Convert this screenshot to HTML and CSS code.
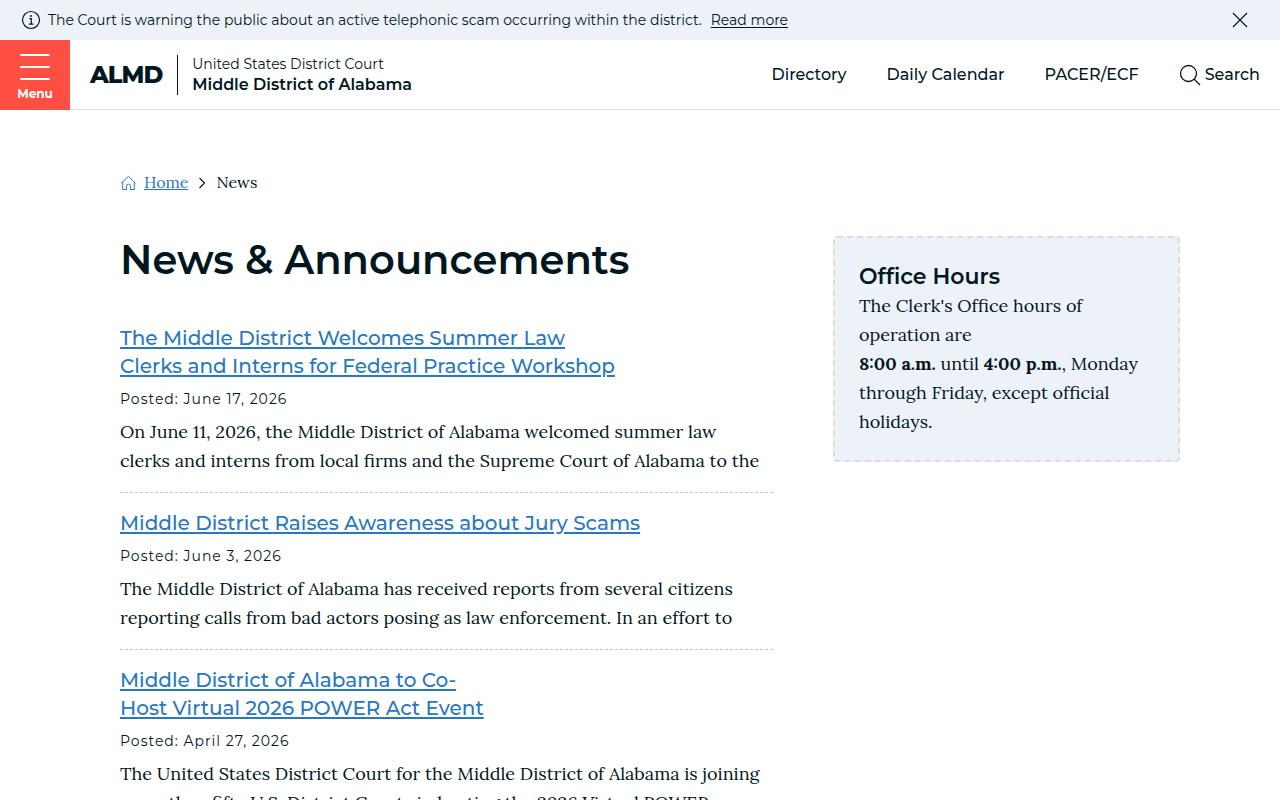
FILE: index.html
```html
<!DOCTYPE html>
<html lang="en">
<head>
<meta charset="utf-8">
<meta name="viewport" content="width=device-width, initial-scale=1">
<title>News &amp; Announcements | Middle District of Alabama</title>
<link rel="stylesheet" href="styles.css">
</head>
<body>
<div class="alert" role="status">
  <svg class="alert-icon" viewBox="0 0 20 20" width="20" height="20" fill="none" stroke="currentColor" aria-hidden="true"><circle cx="10" cy="10" r="8.5" stroke-width="1.2"/><path d="M8.3 8.7h2v5.2M7.8 14.1h4.6" stroke-width="1.2"/><circle cx="9.9" cy="6" r="1" fill="currentColor" stroke="none"/></svg>
  <p class="alert-text">The Court is warning the public about an active telephonic scam occurring within the district.</p>
  <a class="alert-link" href="#">Read more</a>
  <button class="alert-close" type="button" aria-label="Close alert"><svg viewBox="0 0 16 16" width="16" height="16" fill="none" stroke="currentColor" stroke-width="1.2"><path d="M1 1l14 14M15 1L1 15"/></svg></button>
</div>
<header class="header">
  <button class="menu" type="button">
    <svg viewBox="0 0 30 26" width="30" height="26" stroke="currentColor" stroke-width="2" stroke-linecap="round" aria-hidden="true"><path d="M1 1h28M1 13h28M1 25h28"/></svg>
    <span class="menu-label">Menu</span>
  </button>
  <a class="brand" href="#">
    <span class="brand-mark">ALMD</span>
    <span class="brand-name"><span class="brand-court">United States District Court</span><span class="brand-district">Middle District of Alabama</span></span>
  </a>
  <nav class="nav" aria-label="Main">
    <a class="nav-link" href="#">Directory</a>
    <a class="nav-link" href="#">Daily Calendar</a>
    <a class="nav-link" href="#">PACER/ECF</a>
    <button class="search" type="button"><svg viewBox="0 0 22 22" width="22" height="22" fill="none" stroke="currentColor" stroke-width="1.3" aria-hidden="true"><circle cx="9.5" cy="9.5" r="8"/><path d="M15 15l6 6"/></svg>Search</button>
  </nav>
</header>
<main class="page">
  <nav class="crumbs" aria-label="Breadcrumb">
    <a class="crumb-icon" href="#" aria-label="Home page"><svg viewBox="0 0 16 16" width="16" height="16" fill="none" stroke="currentColor" aria-hidden="true"><path d="M1.2 8.3L8.5 1.3l7 7M2.7 7.3v7.2h3.9v-3.7q0-1.6 1.9-1.6t1.9 1.6v3.7h3.9V7.3"/></svg></a>
    <a class="crumb-link" href="#">Home</a>
    <svg class="crumb-sep" viewBox="0 0 8 12" width="8" height="12" fill="none" stroke="currentColor" stroke-width="1.1" aria-hidden="true"><path d="M1.5 1L6.5 6l-5 5"/></svg>
    <span>News</span>
  </nav>
  <div class="columns">
    <section>
      <h1 class="title">News &amp; Announcements</h1>
      <article class="item">
        <h2 class="item-title"><a class="item-link" href="#">The Middle District Welcomes Summer Law <br>Clerks and Interns for Federal Practice Workshop</a></h2>
        <p class="date">Posted: June 17, 2026</p>
        <p class="summary">On June 11, 2026, the Middle District of Alabama welcomed summer law <br>clerks and interns from local firms and the Supreme Court of Alabama to the</p>
      </article>
      <article class="item">
        <h2 class="item-title"><a class="item-link" href="#">Middle District Raises Awareness about Jury Scams</a></h2>
        <p class="date">Posted: June 3, 2026</p>
        <p class="summary">The Middle District of Alabama has received reports from several citizens <br>reporting calls from bad actors posing as law enforcement. In an effort to</p>
      </article>
      <article class="item">
        <h2 class="item-title"><a class="item-link" href="#">Middle District of Alabama to Co-<br>Host Virtual 2026 POWER Act Event</a></h2>
        <p class="date">Posted: April 27, 2026</p>
        <p class="summary">The United States District Court for the Middle District of Alabama is joining <br>more than fifty U.S. District Courts in hosting the 2026 Virtual POWER</p>
      </article>
    </section>
    <aside class="hours">
      <h2 class="hours-title">Office Hours</h2>
      <p class="hours-text">The Clerk's Office hours of <br>operation are<br><strong>8:00 a.m.</strong> until <strong>4:00 p.m.</strong>, Monday <br>through Friday, except official <br>holidays.</p>
    </aside>
  </div>
</main>
</body>
</html>
```
FILE: styles.css
```css
:root {
  --ink: #00171f;
  --link: #2878c0;
  --tint: #edf2f9;
  --sans: Montserrat, Inter, "Open Sans", sans-serif;
  --serif: Lora, "Liberation Serif", serif;
}
* { box-sizing: border-box; }
body, h1, h2, p { margin: 0; }
body { color: var(--ink); background: #fff; font-family: var(--serif); font-size: 18px; line-height: 29px; }
a { color: inherit; }
button { padding: 0; border: 0; background: none; color: inherit; font-family: var(--sans); cursor: pointer; }
svg { display: block; flex: none; }

.alert { display: flex; align-items: center; height: 40px; padding: 0 32px 0 21px; background: var(--tint); font: 14px/20px var(--sans); }
.alert-icon { margin-right: 7px; }
.alert-link { margin-left: 9px; text-underline-offset: 2px; }
.alert-close { margin-left: auto; }

.header { display: flex; height: 70px; border-bottom: 1px solid #dfe2e5; font-family: var(--sans); }
.menu { display: flex; flex-direction: column; align-items: center; gap: 6px; width: 70px; height: 70px; padding-top: 14px; background: #fe4f42; color: #fff; }
.menu-label { font-size: 12px; line-height: 16px; font-weight: 700; }
.brand { display: flex; align-items: center; margin-left: 20px; text-decoration: none; }
.brand-mark { font-size: 24px; font-weight: 800; letter-spacing: -1px; }
.brand-name { display: flex; flex-direction: column; margin-left: 15px; padding-left: 14px; border-left: 1px solid var(--ink); }
.brand-court { font-size: 14px; line-height: 19px; }
.brand-district { font-size: 16px; line-height: 21px; font-weight: 600; }
.nav { display: flex; align-items: center; gap: 40px; margin-left: auto; padding-right: 20px; font-size: 16px; font-weight: 500; }
.nav-link { text-decoration: none; }
.search { display: flex; align-items: center; gap: 4px; font-size: 16px; font-weight: 500; }

.page { padding: 58px 100px 40px 120px; }
.crumbs { display: flex; align-items: center; font-size: 16px; }
.crumb-icon { margin-right: 8px; color: var(--link); }
.crumb-link { color: var(--link); }
.crumb-sep { margin: 0 10px; }
.columns { display: grid; grid-template-columns: minmax(0, 653fr) minmax(0, 347fr); gap: 60px; align-items: start; margin-top: 39px; }
.title { font: 600 40px/48px var(--sans); }
.item { margin-bottom: 16px; padding-bottom: 17px; border-bottom: 1px dashed #bfc4c6; }
.title + .item { margin-top: 40px; }
.item-title { font: 500 20px/28px var(--sans); }
.item-link { color: var(--link); text-decoration-thickness: 2px; text-underline-offset: 2px; }
.date { margin: 9px 0 8px; font: 14px/20px var(--sans); letter-spacing: 1px; }
.hours { padding: 24px; border: 2px dashed #dcdddf; border-radius: 4px; background: var(--tint); }
.hours-title { font: 600 22px/29px var(--sans); }
```
